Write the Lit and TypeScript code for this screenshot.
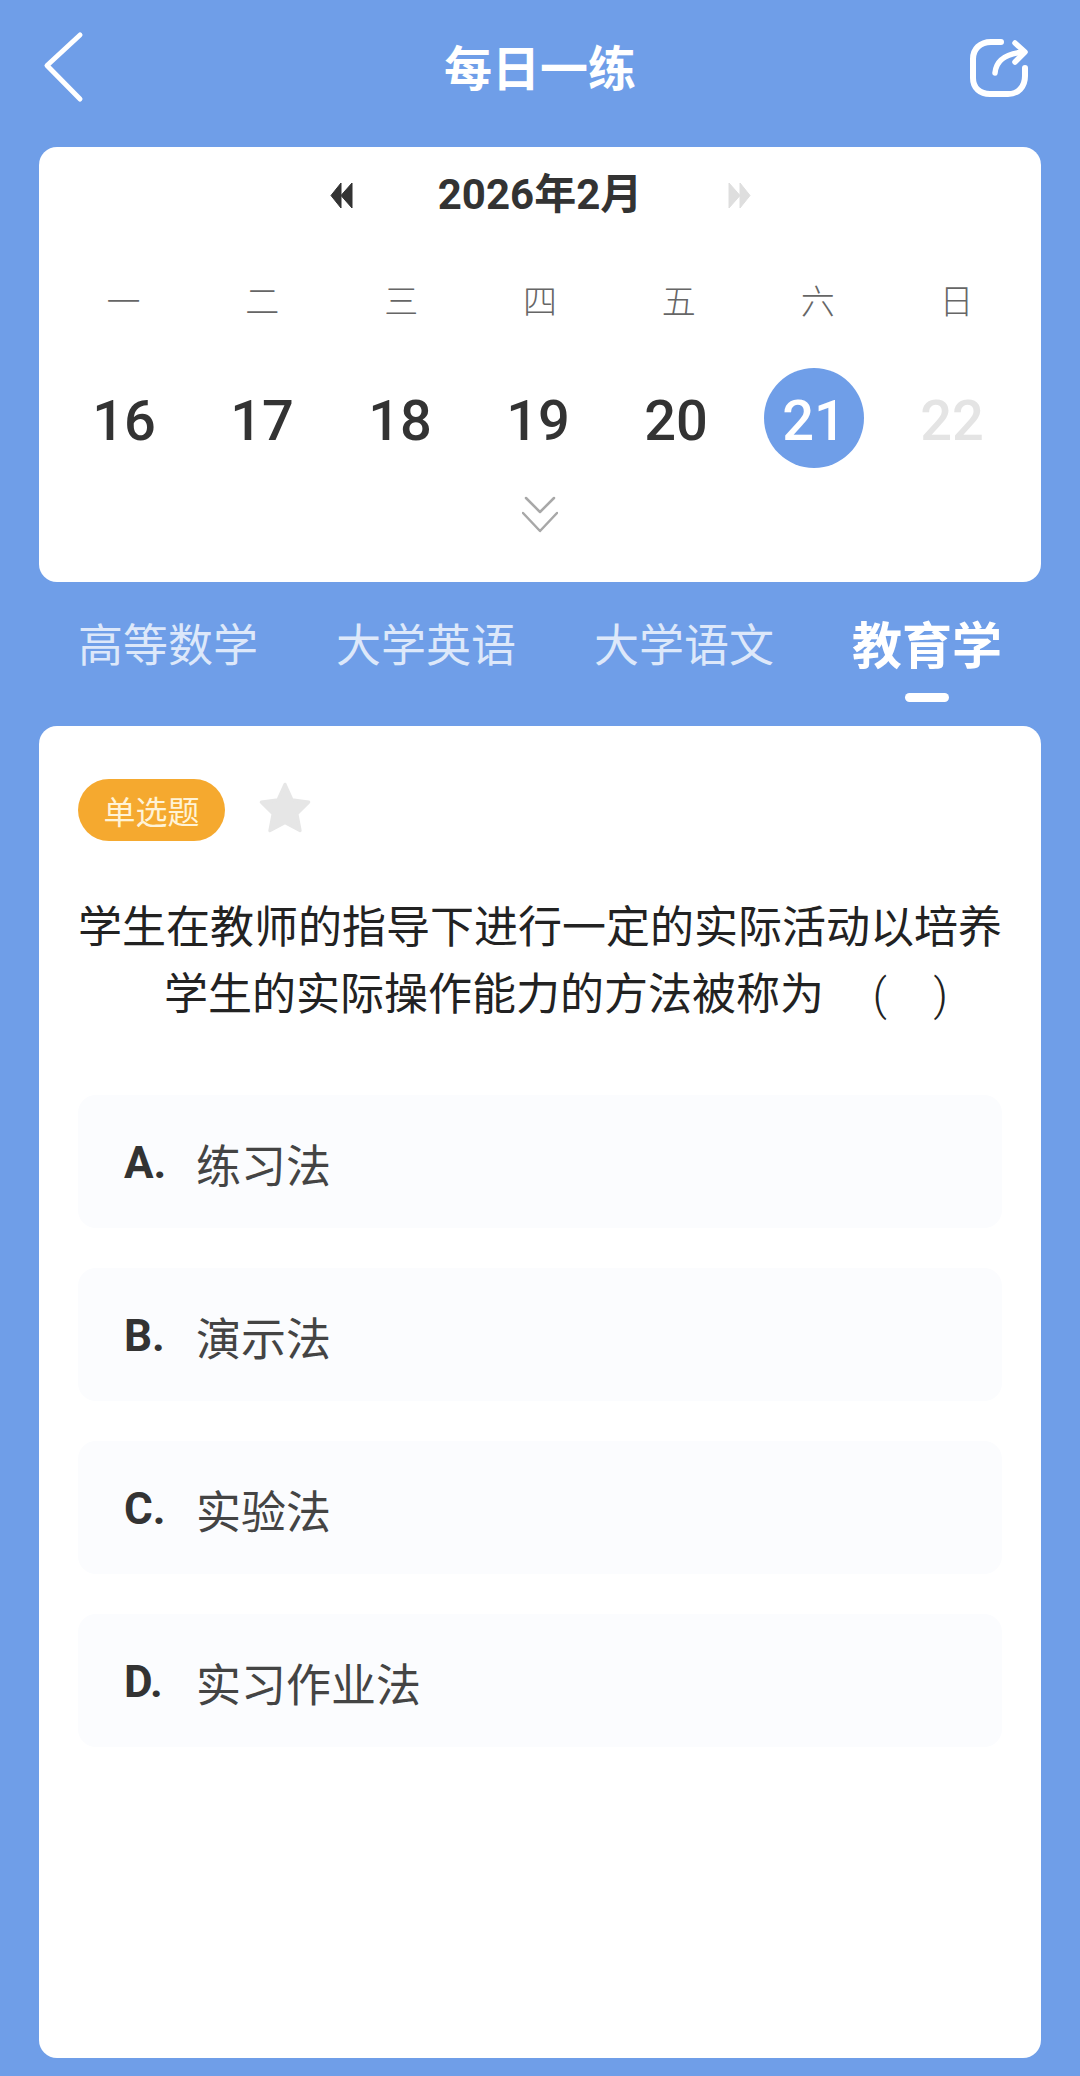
import { LitElement, html, css, svg } from "lit";
import { customElement } from "lit/decorators.js";

const WEEK = ["一", "二", "三", "四", "五", "六", "日"];
const DAYS = [16, 17, 18, 19, 20, 21, 22];
const TABS = ["高等数学", "大学英语", "大学语文", "教育学"];
const OPTIONS = [
  ["A.", "练习法"],
  ["B.", "演示法"],
  ["C.", "实验法"],
  ["D.", "实习作业法"],
];

const doubleArrow = svg`<path d="M2 13.5 12 1v25z M12 13.5 23 1v25z" fill="currentColor" stroke="currentColor" stroke-width="1" stroke-linejoin="round"/>`;

@customElement("app-root")
export class AppRoot extends LitElement {
  static styles = css`
    :host {
      display: block;
      width: 1080px;
      height: 2076px;
      overflow: hidden;
      background: #6f9ee8;
      font-family: Roboto, "Noto Sans CJK SC", sans-serif;
    }
    .page {
      height: 2076px;
      box-sizing: border-box;
      padding: 0 39px 18px;
      display: flex;
      flex-direction: column;
    }
    .header {
      height: 147px;
      flex: none;
      display: grid;
      grid-template-columns: 1fr auto 1fr;
      align-items: center;
      padding-bottom: 14px;
      box-sizing: border-box;
    }
    .back {
      display: block;
      width: 44px;
      height: 72px;
      margin-left: 4px;
    }
    .share {
      display: block;
      width: 60px;
      height: 60px;
      justify-self: end;
      margin-right: 12px;
    }
    .title {
      color: #fff;
      font-size: 48px;
      line-height: 60px;
      font-weight: 700;
      position: relative;
      top: 3px;
    }
    .card {
      background: #fff;
      border-radius: 18px;
    }
    .calendar {
      height: 435px;
      flex: none;
    }
    .month {
      height: 96px;
      display: flex;
      align-items: center;
      justify-content: center;
      color: #333;
    }
    .month-label {
      width: 373px;
      text-align: center;
      font-size: 42px;
      font-weight: 700;
      line-height: 50px;
    }
    .arrow {
      display: block;
      width: 25px;
      height: 27px;
    }
    .arrow.off {
      color: #dedede;
      transform: scaleX(-1);
    }
    .week {
      height: 112px;
      padding: 0 15px;
      display: grid;
      grid-template-columns: repeat(7, 1fr);
      align-items: center;
      text-align: center;
      font-size: 34px;
      color: #666;
      font-weight: 300;
    }
    .days {
      height: 126px;
      padding: 0 20px 0 16px;
      display: grid;
      grid-template-columns: repeat(7, 1fr);
      align-items: center;
      justify-items: center;
      font-size: 56px;
      font-weight: 500;
      color: #333;
    }
    .day {
      width: 100px;
      height: 100px;
      box-sizing: border-box;
      padding-top: 6px;
      display: flex;
      align-items: center;
      justify-content: center;
      border-radius: 50%;
      line-height: 1;
    }
    .day.on {
      background: #6f9ee8;
      color: #fff;
    }
    .day.off {
      color: #e4e4e4;
    }
    .more {
      display: flex;
      justify-content: center;
      height: 68px;
      align-items: center;
    }
    .more svg {
      display: block;
      width: 36px;
      height: 38px;
    }
    .tabs {
      height: 144px;
      flex: none;
      box-sizing: border-box;
      padding: 35px 39px 0;
      display: flex;
      justify-content: space-between;
      align-items: flex-start;
    }
    .tab {
      display: flex;
      flex-direction: column;
      align-items: center;
      color: #dde8fa;
      font-size: 45px;
      line-height: 60px;
    }
    .tab.on {
      color: #fff;
      font-size: 50px;
      font-weight: 700;
    }
    .bar {
      width: 44px;
      height: 9px;
      margin-top: 16px;
      border-radius: 5px;
      background: #fff;
    }
    .question {
      flex: 1;
      box-sizing: border-box;
      padding: 53px 39px 0;
    }
    .meta {
      display: flex;
      align-items: center;
    }
    .pill {
      width: 147px;
      height: 62px;
      border-radius: 31px;
      background: #f5a92f;
      color: #fff3d6;
      font-size: 32px;
      display: flex;
      align-items: center;
      justify-content: center;
    }
    .star {
      display: block;
      width: 56px;
      height: 56px;
      margin: -4px 0 0 32px;
    }
    .stem {
      margin-top: 54px;
      font-size: 44px;
      line-height: 67px;
      color: #222;
    }
    .line {
      display: block;
      white-space: pre;
    }
    .line.second {
      padding-left: 86px;
    }
    .paren {
      font-weight: 300;
    }
    .paren.open {
      margin-left: 5px;
    }
    .paren.close {
      margin-left: 3px;
    }
    .options {
      margin-top: 66px;
      display: flex;
      flex-direction: column;
      gap: 40px;
    }
    .option {
      height: 133px;
      box-sizing: border-box;
      padding: 3px 0 0 46px;
      border-radius: 18px;
      background: #fbfcfe;
      display: flex;
      align-items: center;
      color: #444;
      font-size: 45px;
    }
    .letter {
      width: 72px;
      font-size: 44px;
      font-weight: 700;
      color: #333;
    }
  `;

  render() {
    return html`
      <div class="page">
        <header class="header">
          <svg class="back" viewBox="0 0 44 72" fill="none" stroke="#fff" stroke-width="5" stroke-linecap="round" stroke-linejoin="round">
            <path d="M37 3 4 33.5 37 67" transform="translate(0 1)" />
          </svg>
          <div class="title">每日一练</div>
          <svg class="share" viewBox="0 0 60 60" fill="none" stroke="#fff" stroke-width="6" stroke-linecap="round" stroke-linejoin="round">
            <path d="M32 5H22C11 5 4 12 4 22V41C4 51 11 57 21 57H39C49 57 56 50 56 39V31" />
            <path d="M26 36C27 24 35 17 54 15" stroke-width="5.5" />
            <path d="M46 6 56 15 46 25" stroke-width="5.5" />
          </svg>
        </header>

        <section class="card calendar">
          <div class="month">
            <svg class="arrow" viewBox="0 0 25 27">${doubleArrow}</svg>
            <div class="month-label">2026年2月</div>
            <svg class="arrow off" viewBox="0 0 25 27">${doubleArrow}</svg>
          </div>
          <div class="week">${WEEK.map((d) => html`<div>${d}</div>`)}</div>
          <div class="days">
            ${DAYS.map(
              (d) => html`<div class="day ${d === 21 ? "on" : d === 22 ? "off" : ""}">${d}</div>`
            )}
          </div>
          <div class="more">
            <svg viewBox="0 0 36 38" fill="none" stroke="#a8a8a8" stroke-width="2.5" stroke-linecap="round" stroke-linejoin="round">
              <path d="M4 2 18 16 32 2" />
              <path d="M1 17 18 35 35 17" />
            </svg>
          </div>
        </section>

        <nav class="tabs">
          ${TABS.map(
            (t, i) => html`<div class="tab ${i === 3 ? "on" : ""}">
              <span>${t}</span>
              ${i === 3 ? html`<div class="bar"></div>` : ""}
            </div>`
          )}
        </nav>

        <section class="card question">
          <div class="meta">
            <div class="pill">单选题</div>
            <svg class="star" viewBox="0 0 52 52">
              <path d="M26 4 32.5 18.5 48 20.5 37 31.5 40 47 26 39.5 12 47 15 31.5 4 20.5 19.5 18.5Z" fill="#e6e6e6" stroke="#e6e6e6" stroke-width="3" stroke-linejoin="round" />
            </svg>
          </div>
          <div class="stem">
            <span class="line">学生在教师的指导下进行一定的实际活动以培养</span>
            <span class="line second">学生的实际操作能力的方法被称为\u00a0\u00a0\u00a0\u00a0<span class="paren open">(</span>\u00a0\u00a0\u00a0\u00a0<span class="paren close">)</span></span>
          </div>
          <div class="options">
            ${OPTIONS.map(
              ([k, v]) => html`<div class="option"><span class="letter">${k}</span><span>${v}</span></div>`
            )}
          </div>
        </section>
      </div>
    `;
  }
}
